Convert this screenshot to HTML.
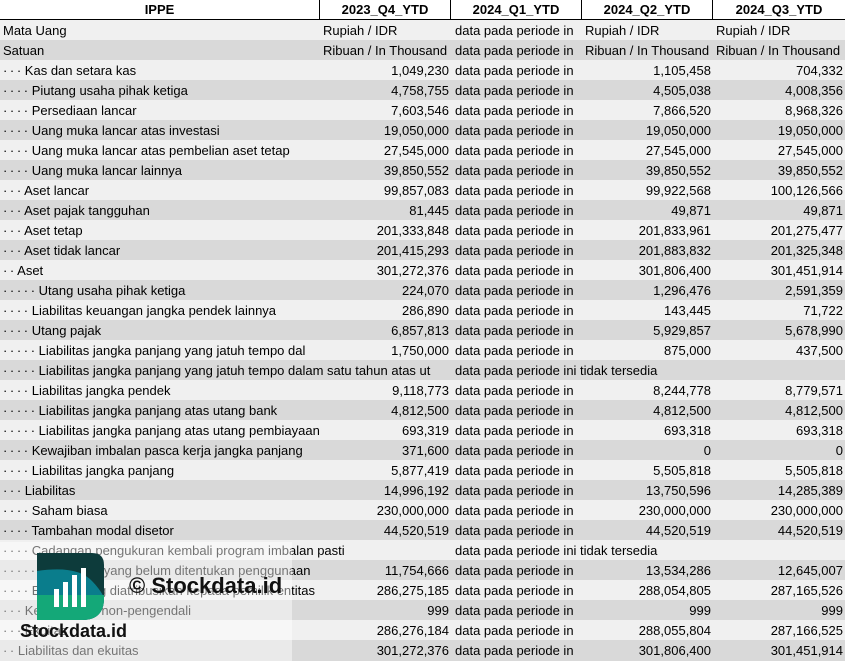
<!DOCTYPE html>
<html><head><meta charset="utf-8"><style>
body{margin:0;width:845px;height:661px;overflow:hidden;background:#fff;font-family:"Liberation Sans",sans-serif;font-size:13px;color:#000}
.r{position:absolute;left:0;width:845px;height:20px;line-height:21px}
.l{background:#f0f0f0}.g{background:#d9d9d9}
.c{position:absolute;top:0;height:20px;overflow:hidden;white-space:nowrap}
.a{left:3px;width:317px}.b{left:320px;width:129px;text-align:right}.d{left:455px;width:127px}.e{left:582px;width:129px;text-align:right}.f{left:713px;width:130px;text-align:right}
.bl{text-align:left;padding-left:3px}
.h{font-weight:bold;text-align:center;border-right:1px solid #000}
</style></head><body>
<div class="r" style="top:0;background:#fff;border-bottom:2px solid #000;height:19px;line-height:19px">
<div class="c h" style="left:0;width:319px">IPPE</div>
<div class="c h" style="left:320px;width:130px">2023_Q4_YTD</div>
<div class="c h" style="left:451px;width:130px">2024_Q1_YTD</div>
<div class="c h" style="left:582px;width:130px">2024_Q2_YTD</div>
<div class="c h" style="left:713px;width:132px;border:none">2024_Q3_YTD</div>
</div>
<div class="r l" style="top:20px"><div class="c a">Mata Uang</div><div class="c b bl" style="left:320px;width:128px">Rupiah / IDR</div><div class="c d">data pada periode in</div><div class="c e bl" style="width:128px">Rupiah / IDR</div><div class="c f bl" style="width:129px">Rupiah / IDR</div></div>
<div class="r g" style="top:40px"><div class="c a">Satuan</div><div class="c b bl" style="width:128px">Ribuan / In Thousand</div><div class="c d">data pada periode in</div><div class="c e bl" style="width:128px">Ribuan / In Thousand</div><div class="c f bl" style="width:129px">Ribuan / In Thousand</div></div>
<div class="r l" style="top:60px"><div class="c a">·&thinsp;·&thinsp;· Kas dan setara kas</div><div class="c b">1,049,230</div><div class="c d">data pada periode in</div><div class="c e">1,105,458</div><div class="c f">704,332</div></div>
<div class="r g" style="top:80px"><div class="c a">·&thinsp;·&thinsp;·&thinsp;· Piutang usaha pihak ketiga</div><div class="c b">4,758,755</div><div class="c d">data pada periode in</div><div class="c e">4,505,038</div><div class="c f">4,008,356</div></div>
<div class="r l" style="top:100px"><div class="c a">·&thinsp;·&thinsp;·&thinsp;· Persediaan lancar</div><div class="c b">7,603,546</div><div class="c d">data pada periode in</div><div class="c e">7,866,520</div><div class="c f">8,968,326</div></div>
<div class="r g" style="top:120px"><div class="c a">·&thinsp;·&thinsp;·&thinsp;· Uang muka lancar atas investasi</div><div class="c b">19,050,000</div><div class="c d">data pada periode in</div><div class="c e">19,050,000</div><div class="c f">19,050,000</div></div>
<div class="r l" style="top:140px"><div class="c a">·&thinsp;·&thinsp;·&thinsp;· Uang muka lancar atas pembelian aset tetap</div><div class="c b">27,545,000</div><div class="c d">data pada periode in</div><div class="c e">27,545,000</div><div class="c f">27,545,000</div></div>
<div class="r g" style="top:160px"><div class="c a">·&thinsp;·&thinsp;·&thinsp;· Uang muka lancar lainnya</div><div class="c b">39,850,552</div><div class="c d">data pada periode in</div><div class="c e">39,850,552</div><div class="c f">39,850,552</div></div>
<div class="r l" style="top:180px"><div class="c a">·&thinsp;·&thinsp;· Aset lancar</div><div class="c b">99,857,083</div><div class="c d">data pada periode in</div><div class="c e">99,922,568</div><div class="c f">100,126,566</div></div>
<div class="r g" style="top:200px"><div class="c a">·&thinsp;·&thinsp;· Aset pajak tangguhan</div><div class="c b">81,445</div><div class="c d">data pada periode in</div><div class="c e">49,871</div><div class="c f">49,871</div></div>
<div class="r l" style="top:220px"><div class="c a">·&thinsp;·&thinsp;· Aset tetap</div><div class="c b">201,333,848</div><div class="c d">data pada periode in</div><div class="c e">201,833,961</div><div class="c f">201,275,477</div></div>
<div class="r g" style="top:240px"><div class="c a">·&thinsp;·&thinsp;· Aset tidak lancar</div><div class="c b">201,415,293</div><div class="c d">data pada periode in</div><div class="c e">201,883,832</div><div class="c f">201,325,348</div></div>
<div class="r l" style="top:260px"><div class="c a">·&thinsp;· Aset</div><div class="c b">301,272,376</div><div class="c d">data pada periode in</div><div class="c e">301,806,400</div><div class="c f">301,451,914</div></div>
<div class="r g" style="top:280px"><div class="c a">·&thinsp;·&thinsp;·&thinsp;·&thinsp;· Utang usaha pihak ketiga</div><div class="c b">224,070</div><div class="c d">data pada periode in</div><div class="c e">1,296,476</div><div class="c f">2,591,359</div></div>
<div class="r l" style="top:300px"><div class="c a">·&thinsp;·&thinsp;·&thinsp;· Liabilitas keuangan jangka pendek lainnya</div><div class="c b">286,890</div><div class="c d">data pada periode in</div><div class="c e">143,445</div><div class="c f">71,722</div></div>
<div class="r g" style="top:320px"><div class="c a">·&thinsp;·&thinsp;·&thinsp;· Utang pajak</div><div class="c b">6,857,813</div><div class="c d">data pada periode in</div><div class="c e">5,929,857</div><div class="c f">5,678,990</div></div>
<div class="r l" style="top:340px"><div class="c a">·&thinsp;·&thinsp;·&thinsp;·&thinsp;· Liabilitas jangka panjang yang jatuh tempo dal</div><div class="c b">1,750,000</div><div class="c d">data pada periode in</div><div class="c e">875,000</div><div class="c f">437,500</div></div>
<div class="r g" style="top:360px"><div class="c a" style="width:448px">·&thinsp;·&thinsp;·&thinsp;·&thinsp;· Liabilitas jangka panjang yang jatuh tempo dalam satu tahun atas ut</div><div class="c d" style="width:380px">data pada periode ini tidak tersedia</div></div>
<div class="r l" style="top:380px"><div class="c a">·&thinsp;·&thinsp;·&thinsp;· Liabilitas jangka pendek</div><div class="c b">9,118,773</div><div class="c d">data pada periode in</div><div class="c e">8,244,778</div><div class="c f">8,779,571</div></div>
<div class="r g" style="top:400px"><div class="c a">·&thinsp;·&thinsp;·&thinsp;·&thinsp;· Liabilitas jangka panjang atas utang bank</div><div class="c b">4,812,500</div><div class="c d">data pada periode in</div><div class="c e">4,812,500</div><div class="c f">4,812,500</div></div>
<div class="r l" style="top:420px"><div class="c a">·&thinsp;·&thinsp;·&thinsp;·&thinsp;· Liabilitas jangka panjang atas utang pembiayaan</div><div class="c b">693,319</div><div class="c d">data pada periode in</div><div class="c e">693,318</div><div class="c f">693,318</div></div>
<div class="r g" style="top:440px"><div class="c a">·&thinsp;·&thinsp;·&thinsp;· Kewajiban imbalan pasca kerja jangka panjang</div><div class="c b">371,600</div><div class="c d">data pada periode in</div><div class="c e">0</div><div class="c f">0</div></div>
<div class="r l" style="top:460px"><div class="c a">·&thinsp;·&thinsp;·&thinsp;· Liabilitas jangka panjang</div><div class="c b">5,877,419</div><div class="c d">data pada periode in</div><div class="c e">5,505,818</div><div class="c f">5,505,818</div></div>
<div class="r g" style="top:480px"><div class="c a">·&thinsp;·&thinsp;· Liabilitas</div><div class="c b">14,996,192</div><div class="c d">data pada periode in</div><div class="c e">13,750,596</div><div class="c f">14,285,389</div></div>
<div class="r l" style="top:500px"><div class="c a">·&thinsp;·&thinsp;·&thinsp;· Saham biasa</div><div class="c b">230,000,000</div><div class="c d">data pada periode in</div><div class="c e">230,000,000</div><div class="c f">230,000,000</div></div>
<div class="r g" style="top:520px"><div class="c a">·&thinsp;·&thinsp;·&thinsp;· Tambahan modal disetor</div><div class="c b">44,520,519</div><div class="c d">data pada periode in</div><div class="c e">44,520,519</div><div class="c f">44,520,519</div></div>
<div class="r l" style="top:540px"><div class="c a" style="width:448px">·&thinsp;·&thinsp;·&thinsp;· Cadangan pengukuran kembali program imbalan pasti</div><div class="c d" style="width:380px">data pada periode ini tidak tersedia</div></div>
<div class="r g" style="top:560px"><div class="c a">·&thinsp;·&thinsp;·&thinsp;·&thinsp;· Saldo laba yang belum ditentukan penggunaan</div><div class="c b">11,754,666</div><div class="c d">data pada periode in</div><div class="c e">13,534,286</div><div class="c f">12,645,007</div></div>
<div class="r l" style="top:580px"><div class="c a">·&thinsp;·&thinsp;·&thinsp;· Ekuitas yang diatribusikan kepada pemilik entitas</div><div class="c b">286,275,185</div><div class="c d">data pada periode in</div><div class="c e">288,054,805</div><div class="c f">287,165,526</div></div>
<div class="r g" style="top:600px"><div class="c a">·&thinsp;·&thinsp;· Kepentingan non-pengendali</div><div class="c b">999</div><div class="c d">data pada periode in</div><div class="c e">999</div><div class="c f">999</div></div>
<div class="r l" style="top:620px"><div class="c a">·&thinsp;·&thinsp;· Ekuitas</div><div class="c b">286,276,184</div><div class="c d">data pada periode in</div><div class="c e">288,055,804</div><div class="c f">287,166,525</div></div>
<div class="r g" style="top:640px;height:21px"><div class="c a">·&thinsp;· Liabilitas dan ekuitas</div><div class="c b">301,272,376</div><div class="c d">data pada periode in</div><div class="c e">301,806,400</div><div class="c f">301,451,914</div></div>
<div style="position:absolute;left:0;top:542px;width:292px;height:119px;background:rgba(255,255,255,0.45)"></div>
<svg style="position:absolute;left:37px;top:553px" width="67" height="67" viewBox="0 0 67 67">
<defs><clipPath id="k"><path d="M0 0H55Q67 0 67 12V45Q67 67 45 67H0Z"/></clipPath></defs>
<g clip-path="url(#k)">
<rect width="67" height="67" fill="#0d3b3b"/>
<path d="M0 18Q40 12 55 28Q62 35 67 44V67H0Z" fill="#0a7d8c"/>
<path d="M0 42H67V67H0Z" fill="#14a878"/>
</g>
<rect x="17" y="36" width="5" height="18" fill="#fff"/>
<rect x="26" y="29" width="5" height="25" fill="#fff"/>
<rect x="35" y="22" width="5" height="32" fill="#fff"/>
<rect x="44" y="15" width="5" height="39" fill="#fff"/>
</svg>
<div style="position:absolute;left:129px;top:572px;font-size:22px;font-weight:bold;color:#111;line-height:28px">© Stockdata.id</div>
<div style="position:absolute;left:20px;top:620px;font-size:18px;font-weight:bold;color:#111;line-height:22px">Stockdata.id</div>
</body></html>
